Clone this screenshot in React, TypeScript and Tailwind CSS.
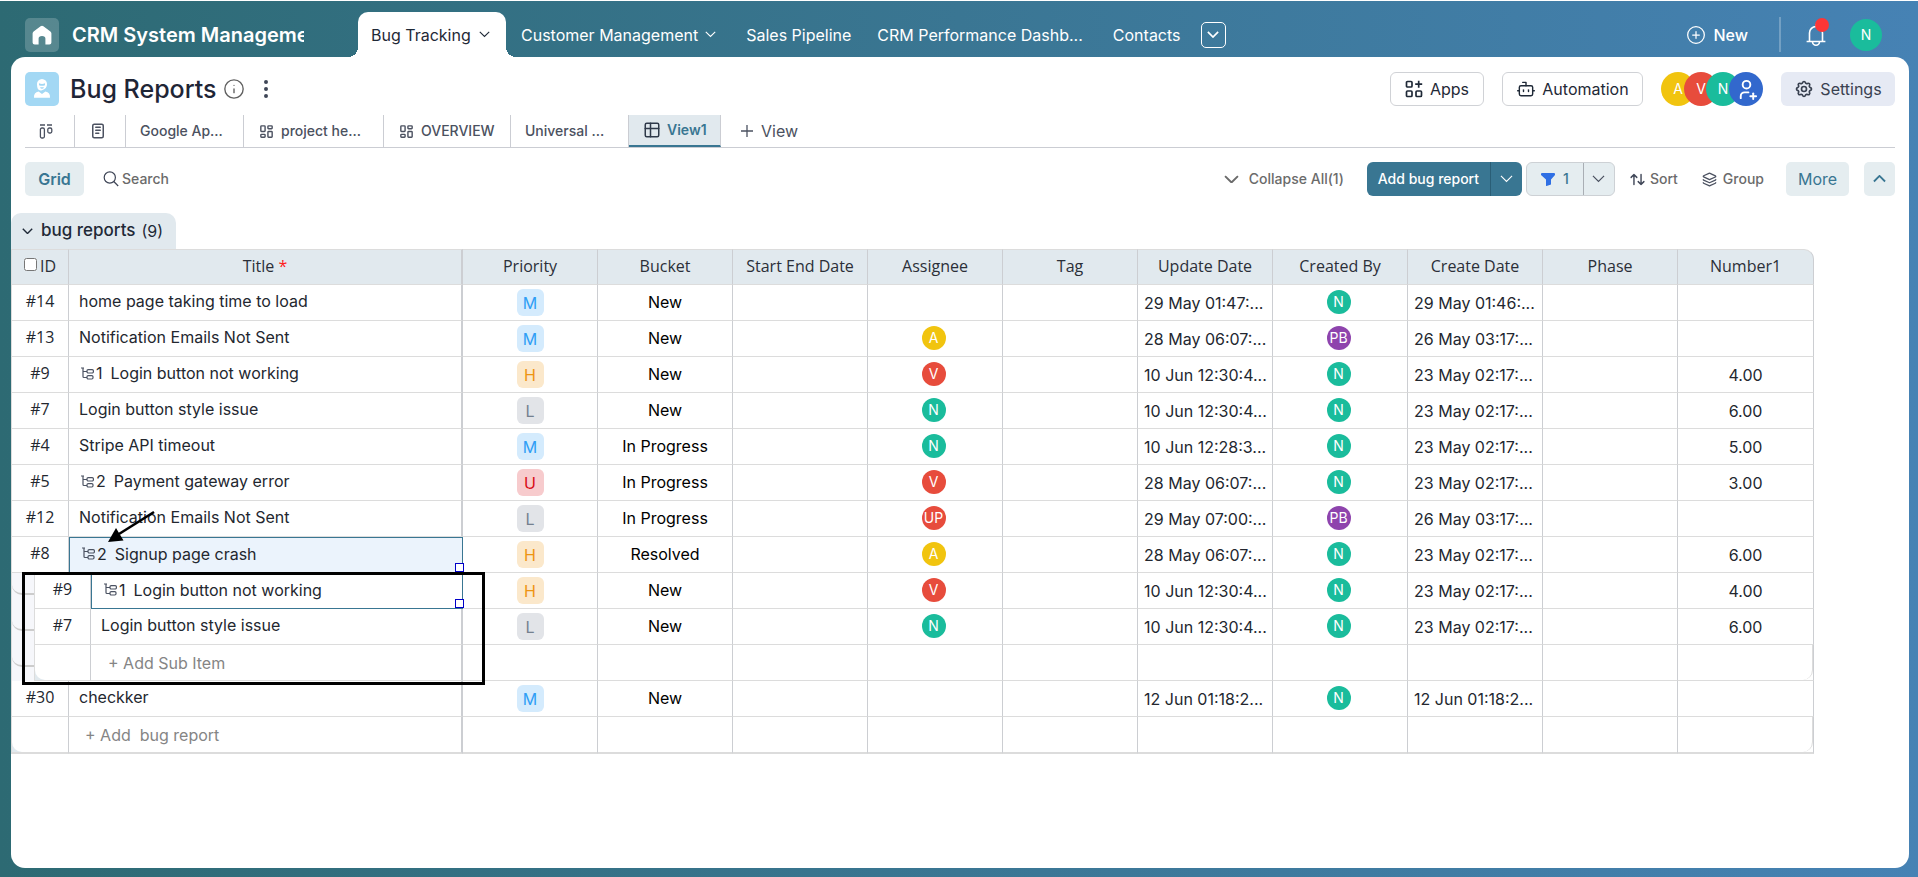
import { ReactNode } from "react";
import clsx from "clsx";
import { Bot, CirclePlus, Info, Layers, EllipsisVertical } from "lucide-react";
import {
  TbArrowsSort,
  TbLayoutDashboard,
  TbNotes,
  TbSettings,
  TbTable,
  TbUserPlus,
} from "react-icons/tb";

type Priority = "M" | "H" | "L" | "U";

type BugRow = {
  id: string;
  title: string;
  children?: number;
  sub?: boolean;
  selected?: "filled" | "outline";
  priority: Priority;
  bucket: string;
  assignee?: string;
  updated: string;
  createdBy: string;
  created: string;
  number?: string;
};

const priorityColors: Record<Priority, string> = {
  M: "bg-[#d4ebfd] text-[#2f9ef5]",
  H: "bg-[#fbe8cb] text-[#ee9412]",
  L: "bg-[#e2e4e8] text-[#74808f]",
  U: "bg-[#f7cbcd] text-[#d90a17]",
};

const avatarColors: Record<string, string> = {
  A: "bg-[#f1c40f]",
  V: "bg-[#e74c3c]",
  UP: "bg-[#e74c3c]",
  N: "bg-[#1abc9c]",
  PB: "bg-[#8e44ad]",
};

const rows: BugRow[] = [
  { id: "#14", title: "home page taking time to load", priority: "M", bucket: "New", updated: "29 May 01:47:...", createdBy: "N", created: "29 May 01:46:..." },
  { id: "#13", title: "Notification Emails Not Sent", priority: "M", bucket: "New", assignee: "A", updated: "28 May 06:07:...", createdBy: "PB", created: "26 May 03:17:..." },
  { id: "#9", title: "Login button not working", children: 1, priority: "H", bucket: "New", assignee: "V", updated: "10 Jun 12:30:4...", createdBy: "N", created: "23 May 02:17:...", number: "4.00" },
  { id: "#7", title: "Login button style issue", priority: "L", bucket: "New", assignee: "N", updated: "10 Jun 12:30:4...", createdBy: "N", created: "23 May 02:17:...", number: "6.00" },
  { id: "#4", title: "Stripe API timeout", priority: "M", bucket: "In Progress", assignee: "N", updated: "10 Jun 12:28:3...", createdBy: "N", created: "23 May 02:17:...", number: "5.00" },
  { id: "#5", title: "Payment gateway error", children: 2, priority: "U", bucket: "In Progress", assignee: "V", updated: "28 May 06:07:...", createdBy: "N", created: "23 May 02:17:...", number: "3.00" },
  { id: "#12", title: "Notification Emails Not Sent", priority: "L", bucket: "In Progress", assignee: "UP", updated: "29 May 07:00:...", createdBy: "PB", created: "26 May 03:17:..." },
  { id: "#8", title: "Signup page crash", children: 2, selected: "filled", priority: "H", bucket: "Resolved", assignee: "A", updated: "28 May 06:07:...", createdBy: "N", created: "23 May 02:17:...", number: "6.00" },
  { id: "#9", title: "Login button not working", children: 1, sub: true, selected: "outline", priority: "H", bucket: "New", assignee: "V", updated: "10 Jun 12:30:4...", createdBy: "N", created: "23 May 02:17:...", number: "4.00" },
  { id: "#7", title: "Login button style issue", sub: true, priority: "L", bucket: "New", assignee: "N", updated: "10 Jun 12:30:4...", createdBy: "N", created: "23 May 02:17:...", number: "6.00" },
];

const lastRow: BugRow = {
  id: "#30", title: "checkker", priority: "M", bucket: "New", updated: "12 Jun 01:18:2...", createdBy: "N", created: "12 Jun 01:18:2...",
};

const columns = ["Priority", "Bucket", "Start End Date", "Assignee", "Tag", "Update Date", "Created By", "Create Date", "Phase", "Number1"];

const cell = "h-9 border-r border-b border-r-[#ccced2] border-b-[#dcdcdc] p-0";

function Chevron({ className, up = false, width = 1.5 }: { className?: string; up?: boolean; width?: number }) {
  return (
    <svg viewBox="0 0 14 8" className={className} fill="none" stroke="currentColor" strokeWidth={width} aria-hidden="true">
      <path d={up ? "M1 7l6-6 6 6" : "M1 1l6 6 6-6"} />
    </svg>
  );
}

function TreeIcon() {
  return (
    <svg viewBox="0 0 13 13" className="size-[13px] text-[#4b5262]" fill="none" stroke="currentColor" strokeWidth="1.2" aria-hidden="true">
      <path d="M0 1h3M2 1v8.500q0 1 1 1h3M2 4.500h4" />
      <rect x="6" y="2.600" width="6.400" height="3.400" rx="1.200" />
      <rect x="6" y="8.600" width="6" height="3.400" rx="1.200" />
    </svg>
  );
}

function Avatar({ name, className }: { name: string; className?: string }) {
  return (
    <span className={clsx("flex items-center justify-center rounded-full text-white", avatarColors[name], className)}>
      {name}
    </span>
  );
}

function TopTab({ children, menu }: { children: ReactNode; menu?: boolean }) {
  return (
    <a href="#" className="flex items-center gap-[7px] whitespace-nowrap">
      {children}
      {menu && <Chevron className="w-[11px]" width={1.4} />}
    </a>
  );
}

function ViewTab({ children, active, className }: { children: ReactNode; active?: boolean; className?: string }) {
  return (
    <a
      href="#"
      className={clsx(
        "flex h-8 items-center gap-[6px] border-r border-[#cbcdd3] pl-[14px] text-sm font-medium whitespace-nowrap",
        active ? "border-b-2 border-b-[#397692] bg-[#e1e9ee] font-semibold text-[#397692]" : "text-[#4b5160]",
        className
      )}
    >
      {children}
    </a>
  );
}

function Header() {
  return (
    <header className="flex h-14 items-center pt-[11px] text-white">
      <a href="#" aria-label="Home" className="ml-[25px] flex size-[34px] shrink-0 items-center justify-center rounded-[5px] bg-white/20">
        <svg viewBox="0 0 20 20" className="size-5" fill="currentColor">
          <path d="M8.600 1.200 1.600 6.500Q.6 7.300.6 8.500V17.500Q.6 19.600 2.700 19.600H6.600V13.500Q6.600 11 10 11t3.400 2.500V19.600H17.300Q19.400 19.600 19.400 17.500V8.500Q19.400 7.300 18.400 6.500L11.400 1.200Q10 .2 8.600 1.200Z" />
        </svg>
      </a>
      <div className="mr-[54px] ml-[13px] w-[232px] shrink-0 overflow-hidden text-xl font-semibold whitespace-nowrap">
        CRM System Manageme
      </div>
      <nav className="flex h-full min-w-0 items-center text-base">
        <a href="#" className="relative mr-[15px] flex h-full w-[148px] items-center justify-between rounded-t-[10px] bg-white pr-4 pl-[13px] whitespace-nowrap text-[#1f2937]">
          Bug Tracking
          <Chevron className="w-[11px]" width={1.4} />
          <span className="absolute bottom-0 -left-[10px] size-[10px] bg-[radial-gradient(circle_at_0_0,transparent_10px,white_10px)]" />
          <span className="absolute -right-[10px] bottom-0 size-[10px] bg-[radial-gradient(circle_at_100%_0,transparent_10px,white_10px)]" />
        </a>
        <div className="flex items-center">
          <TopTab menu>Customer Management</TopTab>
          <span className="w-[30px]" />
          <TopTab>Sales Pipeline</TopTab>
          <span className="w-[26px]" />
          <TopTab>CRM Performance Dashb...</TopTab>
          <span className="w-[30px]" />
          <TopTab>Contacts</TopTab>
          <button aria-label="More tabs" className="ml-5 flex h-[26px] w-[25px] items-center justify-center rounded-[5px] border border-white">
            <Chevron className="w-3" width={2} />
          </button>
        </div>
      </nav>
      <div className="ml-auto flex items-center">
        <button className="flex items-center gap-2 text-base font-medium">
          <CirclePlus className="size-5" strokeWidth={1.5} />
          New
        </button>
        <span className="mr-[25px] ml-[31px] h-[35px] w-[2px] bg-white/25" />
        <button aria-label="Notifications" className="relative">
          <svg viewBox="0 0 20 24" className="h-6 w-5" fill="none" stroke="currentColor" strokeWidth="1.600">
            <path d="M.6 18.500h18.800M3.500 18.500v-8.500a6.500 6.500 0 0 1 13 0v8.500M10 3.500V1M6.500 18.800a3.500 3.500 0 0 0 7 0" />
          </svg>
          <span className="absolute -top-[5px] left-[9px] size-[14px] rounded-full bg-[#fd3636]" />
        </button>
        <Avatar name="N" className="mr-9 ml-6 size-8 text-sm" />
      </div>
    </header>
  );
}

function TitleBar() {
  return (
    <div className="flex items-center pt-[15px]">
      <span className="flex size-[34px] items-center justify-center rounded-[5px] bg-[#a3d8f4] text-white">
        <svg viewBox="0 0 18 20" className="h-5 w-[18px]" fill="currentColor">
          <path d="M9 0a5 5 0 0 1 5 5.200q0 4.600-5 6t-5-6A5 5 0 0 1 9 0Z" />
          <path d="M1 18.800q-.4-5.600 4.600-6.300L9 15l3.400-2.500q5 .7 4.600 6.300Z" />
          <path d="M6 4.200q3 1.400 6 0v2q-3 1.200-6 0ZM7 8.300h4q-.6 1.500-2 1.500T7 8.300Z" fill="#a3d8f4" />
        </svg>
      </span>
      <h1 className="ml-[11px] text-[25px] leading-8 font-medium text-[#1f2536]">Bug Reports</h1>
      <Info className="ml-[6px] size-[22px] text-[#606060]" strokeWidth={1.5} />
      <button aria-label="Options" className="ml-[9px] text-[#3f4657]">
        <EllipsisVertical className="size-6" strokeWidth={2} />
      </button>
      <div className="ml-auto flex items-center text-base text-[#1f2937]">
        <button className="flex h-[34px] w-[94px] items-center justify-center gap-[7px] rounded-md border border-[#d0d2d6]">
          <svg viewBox="0 0 18 18" className="size-[18px]" fill="none" stroke="currentColor" strokeWidth="1.700">
            <rect x="1.500" y="1.500" width="5.500" height="5.500" rx="1" />
            <rect x="1.500" y="11" width="5.500" height="5.500" rx="1" />
            <rect x="11" y="11" width="5.500" height="5.500" rx="1" />
            <path d="M13.700.7v7M10.200 4.200h7" />
          </svg>
          Apps
        </button>
        <button className="ml-[18px] flex h-[34px] w-[141px] items-center justify-center gap-[6px] rounded-md border border-[#d0d2d6]">
          <Bot className="size-5" strokeWidth={1.7} />
          Automation
        </button>
        <div className="ml-[18px] flex items-center text-sm">
          <Avatar name="A" className="size-[34px]" />
          <Avatar name="V" className="-ml-[11px] size-[34px]" />
          <Avatar name="N" className="-ml-3 size-[34px]" />
          <button aria-label="Add member" className="-ml-[11px] flex size-[34px] items-center justify-center rounded-full bg-[#3268cd] text-white">
            <TbUserPlus className="size-[23px]" />
          </button>
        </div>
        <button className="ml-[18px] flex h-[34px] w-[114px] items-center justify-center gap-[6px] rounded-md bg-[#e6eaf4] text-[#394150]">
          <TbSettings className="size-5" />
          Settings
        </button>
      </div>
    </div>
  );
}

function ViewTabs() {
  return (
    <nav className="mt-[9px] flex items-center border-b border-[#cbcdd3]">
      <ViewTab className="w-[50px]">
        <svg viewBox="0 0 14 15" className="h-[15px] w-[14px]" fill="none" stroke="currentColor" strokeWidth="1.300" role="img" aria-label="Board">
          <path d="M1 1h5M8 1h5" />
          <rect x="1.400" y="4" width="4" height="10" rx="1.500" />
          <rect x="8.800" y="4" width="4" height="5" rx="1.500" />
        </svg>
      </ViewTab>
      <ViewTab className="w-[51px]">
        <TbNotes className="size-[18px]" />
      </ViewTab>
      <ViewTab className="w-[118px]">Google Ap...</ViewTab>
      <ViewTab className="w-[140px]">
        <TbLayoutDashboard className="size-[17px]" />
        project he...
      </ViewTab>
      <ViewTab className="w-[127px]">
        <TbLayoutDashboard className="size-[17px]" />
        OVERVIEW
      </ViewTab>
      <ViewTab className="w-[118px]">Universal ...</ViewTab>
      <ViewTab active className="w-[92px]">
        <TbTable className="size-[18px] text-[#2f3a4a]" />
        View1
      </ViewTab>
      <button className="ml-5 flex items-center gap-2 text-base text-[#4b5160]">
        <svg viewBox="0 0 12 12" className="size-3" stroke="currentColor" strokeWidth="1.300">
          <path d="M6 0v12M0 6h12" />
        </svg>
        View
      </button>
    </nav>
  );
}

function Toolbar() {
  return (
    <div className="mt-[14px] flex h-[34px] items-center text-sm font-medium text-[#6b6b6b]">
      <button className="h-full w-[59px] rounded-[5px] bg-[#e5edf0] text-base font-semibold text-[#397692]">Grid</button>
      <button className="ml-[19px] flex items-center gap-[3px]">
        <svg viewBox="0 0 16 16" className="size-4 text-[#3f4657]" fill="none" stroke="currentColor" strokeWidth="1.200">
          <circle cx="6.800" cy="6.500" r="5.600" />
          <path d="m10.800 10.500 4.400 4.500" />
        </svg>
        Search
      </button>
      <div className="ml-auto flex h-full items-center">
        <button className="flex items-center gap-[10px]">
          <Chevron className="w-[15px]" width={1.8} />
          Collapse All(1)
        </button>
        <div className="ml-[23px] flex h-full overflow-hidden rounded-md bg-[#397692] text-white">
          <button className="w-[124px] border-r border-[#2a5e76]">Add bug report</button>
          <button aria-label="More add options" className="flex w-[31px] items-center justify-center">
            <Chevron className="w-[13px]" width={1.2} />
          </button>
        </div>
        <div className="ml-1 flex h-full rounded-md border border-[#cdd1d5] bg-[#e5edf0]">
          <button className="flex w-[57px] items-center justify-center gap-2 border-r border-[#a9aeb4] text-[#397692]">
            <svg viewBox="0 0 14 13" className="h-[13px] w-[14px]" fill="#2f6fe4">
              <path d="M1 0h12q1 0 1 1v1L10 6.500v5L5.500 13q-.5 0-.5-.5v-6L0 2V1Q0 0 1 0Z" />
            </svg>
            1
          </button>
          <button aria-label="Filter options" className="flex w-[30px] items-center justify-center text-[#4b5160]">
            <Chevron className="w-[13px]" width={1.3} />
          </button>
        </div>
        <button className="ml-[14px] flex items-center gap-1">
          <TbArrowsSort className="size-[17px] text-[#3f4657]" />
          Sort
        </button>
        <button className="ml-6 flex items-center gap-[6px]">
          <Layers className="size-[15px] text-[#4b5160]" strokeWidth={2} />
          Group
        </button>
        <button className="ml-[22px] h-full w-[63px] rounded-[5px] bg-[#e5edf0] text-base font-normal text-[#397692]">More</button>
        <button aria-label="Hide toolbar" className="ml-[15px] flex h-full w-[31px] items-center justify-center rounded-[5px] bg-[#e5edf0] text-[#397692]">
          <Chevron up className="w-[13px]" width={2} />
        </button>
      </div>
    </div>
  );
}

function Gutter() {
  return (
    <td className="h-9 border-r border-l border-[#dcdcdc] bg-[#f6f7fb] p-0 align-top">
      <div className="h-[22px] rounded-bl-[10px] border-b-2 border-[#cccccc]" />
    </td>
  );
}

function DataRow({ row }: { row: BugRow }) {
  return (
    <tr>
      {row.sub && <Gutter />}
      <td colSpan={2} className={clsx(cell, "pb-1 text-center font-['Open_Sans',sans-serif]", !row.sub && "border-l border-l-[#dcdcdc]")}>
        {row.id}
      </td>
      <td
        colSpan={row.sub ? 1 : 2}
        className={clsx(
          "relative h-9 p-0 pb-[3px] text-left",
          row.selected ? "border border-[#397692]" : "border-r-2 border-b border-r-[#ccced2] border-b-[#dcdcdc]",
          row.selected === "filled" && "bg-[#ebf3fc]"
        )}
      >
        <div className={clsx("flex items-center", row.children ? "pl-3" : "pl-[10px]")}>
          {row.children && (
            <button className="mr-2 flex items-center gap-[2px]">
              <TreeIcon />
              {row.children}
            </button>
          )}
          {row.title}
        </div>
        {row.selected && <span className="absolute -right-[2px] bottom-0 z-10 size-[9px] border border-[#0000c8] bg-white" />}
      </td>
      <td className={cell}>
        <span className={clsx("mx-auto flex size-[27px] items-center justify-center rounded-md", priorityColors[row.priority])}>
          {row.priority}
        </span>
      </td>
      <td className={clsx(cell, "pb-[2px] text-center text-black")}>{row.bucket}</td>
      <td className={cell} />
      <td className={clsx(cell, "pr-[3px] pb-[2px]")}>
        {row.assignee && <Avatar name={row.assignee} className="mx-auto size-6 text-sm" />}
      </td>
      <td className={cell} />
      <td className={clsx(cell, "pl-[6px] whitespace-nowrap")}>{row.updated}</td>
      <td className={clsx(cell, "pr-[3px] pb-[2px]")}>
        <Avatar name={row.createdBy} className="mx-auto size-6 text-sm" />
      </td>
      <td className={clsx(cell, "pl-[6px] whitespace-nowrap")}>{row.created}</td>
      <td className={cell} />
      <td className={clsx(cell, "text-center")}>{row.number}</td>
    </tr>
  );
}

function AddRow({ label, sub }: { label: string; sub?: boolean }) {
  const bottom = sub ? "" : "h-[37px] border-b-2";
  return (
    <tr>
      {sub && <Gutter />}
      <td colSpan={2} className={clsx(cell, bottom, "bg-[#e1e9ee]", !sub && "border-l border-l-[#dcdcdc]")}>
        <div className="h-[35px] rounded-bl-[10px] bg-white" />
      </td>
      <td colSpan={sub ? 1 : 2} className={clsx("h-9 border-r-2 border-b border-r-[#ccced2] border-b-[#dcdcdc] p-0", bottom)}>
        <button className={clsx("whitespace-pre text-[#858585]", sub ? "ml-[17px]" : "ml-4")}>{label}</button>
      </td>
      {columns.map((c, i) => (
        <td key={c} className={clsx(cell, bottom)}>
          {i === columns.length - 1 && <div className="h-[35px] rounded-br-[10px] border-r border-[#dcdcdc]" />}
        </td>
      ))}
    </tr>
  );
}

function BugTable() {
  return (
    <section className="mt-[17px]">
      <button className="flex h-9 w-[165px] items-center rounded-t-[10px] bg-[#e1e9ee] pl-[11px] text-base font-medium text-[#1f2937]">
        <Chevron className="mr-2 w-[11px]" width={1.8} />
        <span className="text-[17px]">bug reports</span>
        <span className="ml-[6px] font-normal">(9)</span>
      </button>
      <div className="relative">
        <table className="w-[1803px] table-fixed border-separate border-spacing-0 text-base text-[#23272f]">
          <colgroup>
            <col className="w-6" />
            <col className="w-[34px]" />
            <col className="w-[22px]" />
            <col className="w-[372px]" />
            {columns.map((c) => (
              <col key={c} className={c === "Number1" ? "w-[136px]" : "w-[135px]"} />
            ))}
          </colgroup>
          <thead className="font-['Open_Sans',sans-serif] text-[#2b2f38]">
            <tr>
              <th colSpan={2} className={clsx(cell, "border-t border-l border-t-[#dcdcdc] border-l-[#dcdcdc] bg-[#e1e9ee] pb-[2px] font-normal")}>
                <label className="flex items-center justify-center gap-[3px]">
                  <input type="checkbox" className="mb-1 size-[13px]" />
                  ID
                </label>
              </th>
              <th colSpan={2} className={clsx(cell, "border-t border-r-2 border-t-[#dcdcdc] bg-[#e1e9ee] pb-[2px] font-normal")}>
                Title <span className="text-[#ff1a1a]">*</span>
              </th>
              {columns.map((c, i) => (
                <th
                  key={c}
                  className={clsx(cell, "border-t border-t-[#dcdcdc] bg-[#e1e9ee] pb-[2px] font-normal", i === columns.length - 1 && "rounded-tr-[10px]")}
                >
                  {c}
                </th>
              ))}
            </tr>
          </thead>
          <tbody>
            {rows.map((row, i) => (
              <DataRow key={i} row={row} />
            ))}
            <AddRow label="+ Add Sub Item" sub />
            <DataRow row={lastRow} />
            <AddRow label="+ Add  bug report" />
          </tbody>
        </table>
        {/* callout around the expanded sub items */}
        <div className="pointer-events-none absolute top-[323px] left-[11px] z-20 h-[113px] w-[463px] border-[3px] border-black" />
        <svg viewBox="0 0 48 34" className="pointer-events-none absolute top-[261px] left-[96px] z-20 h-[34px] w-12">
          <path d="M47 2 12 24" stroke="black" strokeWidth="2.600" />
          <path d="M1 32 9 18l7.500 12.500Z" fill="black" />
        </svg>
      </div>
    </section>
  );
}

export default function App() {
  return (
    <div className="flex min-h-screen flex-col border-t border-white bg-linear-to-r from-[#2d6a73] via-[#3a7693] to-[#4682b4] font-['Inter',sans-serif]">
      <Header />
      <main className="mr-[9px] mb-[9px] ml-[11px] flex-1 overflow-hidden rounded-[14px] bg-white">
        <div className="px-[14px]">
          <TitleBar />
          <ViewTabs />
          <Toolbar />
        </div>
        <BugTable />
      </main>
    </div>
  );
}
